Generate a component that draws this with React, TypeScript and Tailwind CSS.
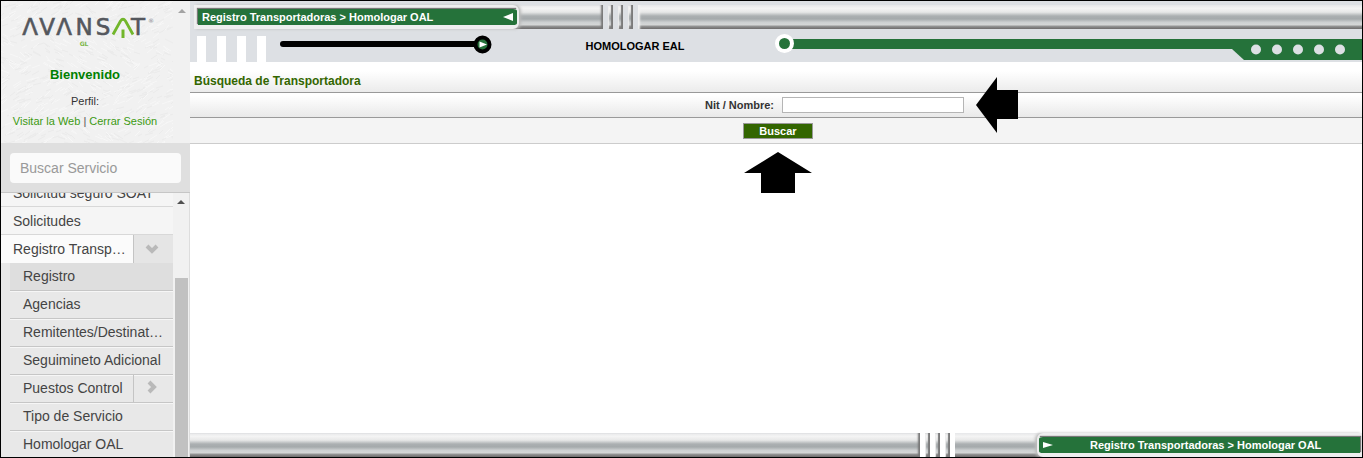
import React from "react";

const METAL =
  "bg-[linear-gradient(to_bottom,#e6e7e9_0%,#f4f4f4_14%,#e6e7e7_30%,#abafb1_46%,#a5aaac_58%,#cdd0d1_72%,#d4d6d6_82%,#8d8d8d_90%,#6e6c6c_100%)]";

const STROKES = Array.from({ length: 900 }, (_, i) => {
  const x = (i * 61 + ((i * i) % 17)) % 178;
  const y = (i * 89 + ((i * i) % 31)) % 148;
  const up = Math.sin(x / 19) + Math.cos(y / 17) > 0;
  const dx = 4 + (i % 5);
  const dy = (up ? -1 : 1) * (2 + (i % 4));
  return `M${x - 3} ${y}l${dx} ${dy}`;
});

function Texture() {
  return (
    <svg className="absolute inset-0 h-full w-full" aria-hidden="true">
      <path d={STROKES.filter((_, i) => i % 2 === 0).join("")} fill="none" stroke="#ebebeb" strokeWidth="1" />
      <path d={STROKES.filter((_, i) => i % 2 === 1).join("")} fill="none" stroke="#f7f7f7" strokeWidth="1" />
    </svg>
  );
}

function Logo() {
  return (
    <svg width="136" height="44" viewBox="0 -8 136 44" role="img" aria-label="AVANSAT GL" className="font-['DejaVu_Sans',sans-serif]">
      <g fill="#54575d" stroke="#54575d" strokeWidth="0.6" fontSize="23" textAnchor="middle">
        <text x="11" y="18">Λ</text>
        <text x="28" y="18">V</text>
        <text x="45" y="18">Λ</text>
        <text x="65" y="18">N</text>
        <text x="84" y="18">S</text>
        <text x="119" y="18">T</text>
      </g>
      <path d="M94 17.500L101.500 4Q104 0.500 106.500 4L114 17.500" fill="none" stroke="#72b62b" strokeWidth="2.800" />
      <path d="M104 12.500V21" fill="none" stroke="#72b62b" strokeWidth="3" />
      <text x="132" y="6" fontSize="6" fill="#85878b" textAnchor="middle">®</text>
      <text x="65" y="29" fontSize="6" fontWeight="700" fill="#7cb648" textAnchor="middle">GL</text>
    </svg>
  );
}

function Chevron({ down = false }: { down?: boolean }) {
  return (
    <svg width="14" height="14" viewBox="0 0 14 14" aria-hidden="true">
      <path d={down ? "M2 4L7 9L12 4" : "M4 2L9 7L4 12"} fill="none" stroke="#b9b9b9" strokeWidth="4" />
    </svg>
  );
}

function MenuItem({ label, chevron, active }: { label: string; chevron?: boolean; active?: boolean }) {
  return (
    <li className={`flex h-7 shrink-0 ${active ? "bg-[#fbfbfb]" : "border-b border-[#d8d8d8] bg-[#f5f5f5]"}`}>
      <a href="#" className={`min-w-0 flex-1 truncate pl-3 leading-7 ${chevron ? "pr-1" : "pr-2"}`}>{label}</a>
      {chevron && (
        <button aria-label="Contraer" className="flex w-10 items-center justify-center border-l border-[#c4c4c4] bg-[#e5e5e5] pr-1">
          <Chevron down />
        </button>
      )}
    </li>
  );
}

function SubItem({ label, chevron, selected }: { label: string; chevron?: boolean; selected?: boolean }) {
  return (
    <li className={`ml-[9px] flex h-7 shrink-0 border-b border-b-[#c6c6c6] ${selected ? "bg-[#dedede]" : "bg-[#e8e8e8] shadow-[inset_0_1px_0_#f6f6f6]"}`}>
      <a href="#" className={`min-w-0 flex-1 truncate pl-[13px] leading-[26px] ${chevron ? "" : "pr-2"}`}>{label}</a>
      {chevron && (
        <button aria-label="Expandir" className="flex w-10 items-center justify-center border-l border-[#c4c4c4] pr-1 pb-1">
          <Chevron />
        </button>
      )}
    </li>
  );
}

function Sidebar() {
  return (
    <aside className="flex w-[189px] shrink-0 flex-col bg-[#f1f1f1]">
      <header className="flex h-[142px] shrink-0">
        <div className="relative flex flex-1 flex-col items-center overflow-hidden bg-[#f1f1f1] pr-1 text-center">
          <Texture />
          <div className="relative flex flex-col items-center">
            <div className="mt-2 pl-1">
              <Logo />
            </div>
            <h1 className="mt-3 text-[13px] leading-5 font-bold text-[#008000]">Bienvenido</h1>
            <p className="mt-2 text-[11px] leading-4 text-[#333]">Perfil:</p>
            <p className="mt-1 text-[11px] leading-4 whitespace-nowrap text-[#3c9a12]">
              <a href="#">Visitar la Web</a> <span className="text-[#555]">|</span> <a href="#">Cerrar Sesión</a>
            </p>
          </div>
        </div>
        <div className="flex w-[17px] justify-center pt-2">
          <svg width="8" height="4" viewBox="0 0 8 4" aria-hidden="true"><path d="M0 4L4 0L8 4Z" fill="#a3a3a3" /></svg>
        </div>
      </header>
      <div className="flex h-[50px] shrink-0 items-center border-b border-[#c6c6c6] bg-[#dfdfdf] px-[9px]">
        <input type="text" aria-label="Buscar Servicio" placeholder="Buscar Servicio" className="h-[30px] w-full rounded bg-[#fafafa] px-2.5 text-sm placeholder:text-[#999] focus:outline-none" />
      </div>
      <div className="flex min-h-0 flex-1 overflow-hidden">
        <nav className="min-w-0 flex-1 overflow-hidden bg-[#e8e8e8] text-sm text-[#444]">
          <ul className="-mt-3.5 flex flex-col">
            <MenuItem label="Solicitud seguro SOAT" />
            <MenuItem label="Solicitudes" />
            <MenuItem label="Registro Transportadoras" chevron active />
            <SubItem label="Registro" selected />
            <SubItem label="Agencias" />
            <SubItem label="Remitentes/Destinatarios" />
            <SubItem label="Seguimineto Adicional" />
            <SubItem label="Puestos Control" chevron />
            <SubItem label="Tipo de Servicio" />
            <SubItem label="Homologar OAL" />
          </ul>
        </nav>
        <div className="flex w-[17px] flex-col items-center border-r border-[#ddd]">
          <svg className="mt-[7px] shrink-0" width="8" height="4" viewBox="0 0 8 4" aria-hidden="true"><path d="M0 4L4 0L8 4Z" fill="#505050" /></svg>
          <div className="mt-[74px] w-[13px] flex-1 bg-[#c1c1c1]" />
        </div>
      </div>
    </aside>
  );
}

function Slits({ gap }: { gap: string }) {
  return (
    <div className={`flex w-[35px] shrink-0 ${gap}`} aria-hidden="true">
      {[0, 1, 2].map((n) => (
        <React.Fragment key={n}>
          <span className="w-[5px]" />
          <span className={`w-[5px] shadow-[inset_-2px_0_1px_#7b7b7b,inset_1px_0_1px_#eee] ${METAL}`} />
        </React.Fragment>
      ))}
      <span className="w-[5px]" />
    </div>
  );
}

function Banner() {
  return (
    <header className="shrink-0 bg-[#dde0e4] pt-1">
      <div className="flex h-6 pl-1">
        <div className={`flex w-[409px] shrink-0 shadow-[inset_-3px_0_2px_-1px_#777] ${METAL}`}>
          <div className="flex w-[325px] rounded-r-md border-t-4 border-r-2 border-b-4 border-l-4 border-[#eeeeef] bg-[#25723a] shadow-[2px_0_3px_#bbb]">
            <p className="flex flex-1 items-center justify-between px-1 text-[11px] leading-4 font-bold text-white shadow-[-1px_-1px_1px_#777]">
              <span>Registro Transportadoras &gt; Homologar OAL</span>
              <svg width="10" height="8" viewBox="0 0 10 8" aria-hidden="true"><path d="M0 4L10 0V8Z" fill="#fff" /></svg>
            </p>
          </div>
        </div>
        <Slits gap="bg-[#dde0e4]" />
        <div className={`flex-1 shadow-[inset_4px_0_2px_-2px_#f2f2f2] ${METAL}`} />
      </div>
      <div className="flex h-[33px]">
        <div className="flex w-[90px] shrink-0 items-end gap-[11px] pl-[7px]" aria-hidden="true">
          {[0, 1, 2, 3].map((n) => <span key={n} className="h-[26px] w-[9px] bg-white" />)}
        </div>
        <svg className="mt-[5px] shrink-0" width="213" height="20" viewBox="0 0 213 20" aria-hidden="true">
          <path d="M3 10H200" stroke="#000" strokeWidth="6" strokeLinecap="round" />
          <circle cx="202.500" cy="10.500" r="7" fill="#25723a" stroke="#000" strokeWidth="4" />
          <path d="M199.500 7.500L207 10.500L199.500 13.500Z" fill="#fff" />
        </svg>
        <h2 className="w-[282px] shrink-0 pt-[7px] pl-0.5 text-center text-[11px] leading-5 font-bold text-black">HOMOLOGAR EAL</h2>
        <svg className="mt-1 shrink-0" width="20" height="21" viewBox="0 0 20 21" aria-hidden="true">
          <path d="M12 6H20V16H12Z" fill="#25723a" />
          <circle cx="9.500" cy="10.500" r="9.500" fill="#fff" />
          <circle cx="9.500" cy="10.500" r="5.500" fill="#25723a" />
        </svg>
        <div className="mt-[10px] h-[10px] flex-1 bg-[#25723a]" />
        <svg className="mt-[10px] shrink-0" width="130" height="21" viewBox="0 0 130 21" aria-hidden="true">
          <path d="M0 0H130V21H12L0 10Z" fill="#25723a" />
          {[24, 45, 66, 87, 108].map((x) => <circle key={x} cx={x} cy="10.500" r="5" fill="#dde0e4" />)}
        </svg>
      </div>
    </header>
  );
}

function SearchForm() {
  return (
    <form className="shrink-0" onSubmit={(e) => e.preventDefault()}>
      <h3 className="h-[31px] border-b border-[#999] bg-[linear-gradient(to_bottom,#fff_30%,#ebebeb)] pt-[9px] pl-1 text-[12px] leading-5 font-bold text-[#336600]">
        Búsqueda de Transportadora
      </h3>
      <div className="flex h-[25px] items-center border-b border-[#999] bg-[linear-gradient(to_bottom,#fff_10%,#e9e9e9)]">
        <label htmlFor="nit" className="w-1/2 pr-0.5 text-right text-[11px] font-bold text-[#333]">Nit / Nombre:</label>
        <div className="relative ml-1.5">
          <input id="nit" type="text" className="block h-4 w-[182px] border border-[#b5b5b5] bg-white px-1 text-[11px] focus:outline-none" />
          <svg className="absolute -top-5 left-[194px]" width="43" height="56" viewBox="0 0 43 56" aria-hidden="true">
            <path d="M0 28L21 0V13H42V42H21V56Z" />
          </svg>
        </div>
      </div>
      <div className="flex h-[26px] items-center justify-center border-b border-[#ccc] bg-[#f4f4f4] pl-1">
        <div className="relative">
          <button type="submit" className="block h-4 w-[70px] border border-[#999] bg-[#336600] text-[11px] leading-[14px] font-bold text-white">Buscar</button>
          <svg className="absolute top-[29px] left-px" width="69" height="42" viewBox="0 0 69 42" aria-hidden="true">
            <path d="M34 0L68 21H51V41H17V21H0Z" />
          </svg>
        </div>
      </div>
    </form>
  );
}

function Footer() {
  return (
    <footer className="flex h-6 shrink-0">
      <div className={`flex-1 shadow-[inset_-3px_0_2px_-1px_#777] ${METAL}`} />
      <Slits gap="bg-white" />
      <div className={`flex w-[407px] shrink-0 justify-end ${METAL}`}>
        <div className="flex w-[325px] rounded-l-md border-t-4 border-r-2 border-b-4 border-l-2 border-[#eeeeef] bg-[#25723a] shadow-[-2px_0_3px_#bbb]">
          <p className="flex flex-1 items-center pl-1 text-[11px] leading-4 font-bold text-white shadow-[1px_-1px_1px_#777]">
            <svg width="10" height="6" viewBox="0 0 10 6" aria-hidden="true"><path d="M0 0L10 3L0 6Z" fill="#fff" /></svg>
            <span className="ml-[37px]">Registro Transportadoras &gt; Homologar OAL</span>
          </p>
        </div>
      </div>
    </footer>
  );
}

export default function App() {
  return (
    <div className="flex h-screen w-full overflow-hidden border border-black bg-white font-['Liberation_Sans',Arial,sans-serif]">
      <Sidebar />
      <main className="flex min-w-0 flex-1 flex-col">
        <Banner />
        <SearchForm />
        <div className="flex-1" />
        <Footer />
      </main>
    </div>
  );
}
